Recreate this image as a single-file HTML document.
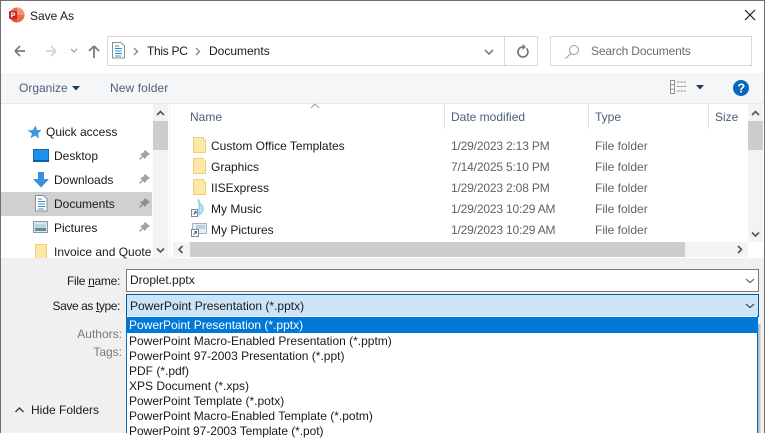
<!DOCTYPE html>
<html><head><meta charset="utf-8"><style>
html,body{margin:0;padding:0}
body{width:765px;height:433px;overflow:hidden;background:#fff;position:relative;font-family:"Liberation Sans",sans-serif;font-size:12px;color:#1a1a1a}
.a{position:absolute}
.t{position:absolute;white-space:nowrap;line-height:16px;height:16px}
.d{color:#5f6368}
.dt{letter-spacing:-.17px}
.h{color:#4c607a}
svg{position:absolute;overflow:visible}
</style></head><body>
<!-- regions -->
<div class="a" style="left:1px;top:73px;width:763px;height:30px;background:#f5f6f7"></div>
<div class="a" style="left:1px;top:103px;width:763px;height:1px;background:#e8eaec"></div>
<div class="a" style="left:1px;top:258px;width:763px;height:175px;background:#f0f0f0"></div>
<!-- frame -->
<div class="a" style="left:0;top:0;width:765px;height:1px;background:#6f6f6f"></div>
<div class="a" style="left:0;top:0;width:1px;height:433px;background:#6f6f6f"></div>
<div class="a" style="left:764px;top:0;width:1px;height:433px;background:#6f6f6f"></div>
<!-- title -->
<svg style="left:8px;top:7px" width="18" height="18"><circle cx="9" cy="8" r="7.500" fill="#ed6c47"/><path d="M9 .5A7.500 7.500 0 0 1 16.500 8H9z" fill="#ff8f6b"/><path d="M9 15.500A7.500 7.500 0 0 1 1.500 8H9z" fill="#d35230"/><rect x="1" y="4" width="8" height="8" rx="1" fill="#c4262e"/><text x="2.800" y="10.600" font-size="7" font-weight="bold" fill="#fff" font-family="Liberation Sans">P</text></svg>
<div class="t" style="left:30px;top:8px">Save As</div>
<svg style="left:744px;top:9px" width="14" height="14"><path d="M1 1L11 11M11 1L1 11" stroke="#111" stroke-width="1.100" fill="none"/></svg>
<!-- nav -->
<svg style="left:13px;top:43px" width="90" height="16"><path d="M2 8H12M2 8L7 3M2 8L7 13" stroke="#7a7a7a" stroke-width="1.700" fill="none"/><path d="M43 8H33M43 8L38 3M43 8L38 13" stroke="#d2d2d2" stroke-width="1.700" fill="none"/><path d="M58 6L61 9L64 6" stroke="#a9a9a9" stroke-width="1.400" fill="none"/><path d="M81 15V3M81 3L76 8M81 3L86 8" stroke="#7a7a7a" stroke-width="1.800" fill="none"/></svg>
<!-- address -->
<div class="a" style="left:107px;top:36px;width:429px;height:28px;border:1px solid #d9d9d9;background:#fff"></div>
<div class="a" style="left:504px;top:37px;width:1px;height:28px;background:#d9d9d9"></div>
<svg style="left:112px;top:42px" width="14" height="17"><path d="M.5.5H9L12.500 4V16H.5z" fill="#fff" stroke="#8a8f94"/><path d="M3 4H7M3 6.500H10M3 9H10M3 11.500H10M3 14H9" stroke="#2a8fd0" stroke-width="1"/></svg>
<svg style="left:133px;top:47px" width="8" height="10"><path d="M1 1L4.500 4.500L1 8" stroke="#8a8a8a" stroke-width="1.400" fill="none"/></svg>
<div class="t" style="left:147px;top:43px;letter-spacing:-.3px">This PC</div>
<svg style="left:195px;top:47px" width="8" height="10"><path d="M1 1L4.500 4.500L1 8" stroke="#8a8a8a" stroke-width="1.400" fill="none"/></svg>
<div class="t" style="left:209px;top:43px">Documents</div>
<svg style="left:484px;top:49px" width="12" height="8"><path d="M1 1L5 5L9 1" stroke="#6e6e6e" stroke-width="1.500" fill="none"/></svg>
<svg style="left:516px;top:44px" width="14" height="15"><path d="M10.500 4.500A5 5 0 1 1 6.500 3H8" stroke="#777" stroke-width="1.700" fill="none"/><path d="M6.500 0L10 3L6.500 6z" fill="#777"/></svg>
<!-- search -->
<div class="a" style="left:550px;top:36px;width:200px;height:28px;border:1px solid #d9d9d9;background:#fff"></div>
<svg style="left:564px;top:44px" width="16" height="15"><circle cx="10" cy="6" r="4.500" stroke="#9a9a9a" fill="none"/><path d="M7 9.500L1.500 14.500" stroke="#9a9a9a" stroke-width="1.100"/></svg>
<div class="t" style="left:591px;top:43px;color:#6b6b6b;letter-spacing:-.15px">Search Documents</div>
<!-- toolbar -->
<div class="t h" style="left:19px;top:80px">Organize</div>
<svg style="left:72px;top:86px" width="9" height="6"><path d="M0 0H8L4 4.500z" fill="#1e3a5f"/></svg>
<div class="t h" style="left:110px;top:80px;letter-spacing:.1px">New folder</div>
<svg style="left:670px;top:80px" width="18" height="14"><path d="M.5 .5H4.500V13.500H.5zM.5 4.800H4.500M.5 9.100H4.500" stroke="#8f8f8f" fill="#fff"/><path d="M7 2H16M7 6.500H16M7 11H16" stroke="#8f8f8f" stroke-dasharray="2.500 1"/></svg>
<svg style="left:696px;top:85px" width="9" height="6"><path d="M0 0H8L4 4.500z" fill="#1e3a5f"/></svg>
<svg style="left:733px;top:80px" width="17" height="17"><circle cx="8" cy="8" r="8" fill="#0a66b8"/><text x="4.500" y="12.500" font-size="12.500" font-weight="bold" fill="#fff" font-family="Liberation Sans">?</text></svg>
<!-- sidebar -->
<div class="a" style="left:1px;top:192px;width:151px;height:24px;background:#d0d0d0"></div>
<svg style="left:27px;top:125px" width="15" height="15"><path d="M8.500 0.500L10 5L14.500 5L11 8.500L12 13.500L8 10.500L3.500 13.500L5 8.500L.5 5.500L6 5z" fill="#3a96dd"/></svg>
<div class="t" style="left:46px;top:124px">Quick access</div>
<svg style="left:33px;top:149px" width="17" height="14"><rect x=".5" y=".5" width="15" height="11" fill="#1e90ea" stroke="#0f6cbd"/><rect x="0" y="11" width="16" height="2" fill="#0f5fa8"/></svg>
<div class="t" style="left:54px;top:148px">Desktop</div>
<svg style="left:33px;top:172px" width="17" height="17"><path d="M5 0H11V7H16L8 15.500L0 7H5z" fill="#3a8fdc"/></svg>
<div class="t" style="left:54px;top:172px">Downloads</div>
<svg style="left:35px;top:195px" width="13" height="17"><path d="M.5.5H8.500L12 4V16H.5z" fill="#fff" stroke="#8a8f94"/><path d="M3 4H7M3 6.500H10M3 9H10M3 11.500H10M3 14H9" stroke="#2a8fd0"/></svg>
<div class="t" style="left:54px;top:196px">Documents</div>
<svg style="left:33px;top:221px" width="16" height="14"><rect x=".5" y=".5" width="14" height="11" fill="#dbe7ee" stroke="#8d979e"/><path d="M2 7H13V10H2z" fill="#5f8f8a"/><path d="M2 3H13V7H2z" fill="#bcd3e4"/></svg>
<div class="t" style="left:54px;top:220px">Pictures</div>
<div class="a" style="left:35px;top:244px;width:12px;height:14px;background:#fce8a8;border:1px solid #f0d070;border-bottom:none;box-sizing:border-box"></div>
<div class="t" style="left:54px;top:244px;width:98px;overflow:hidden">Invoice and Quote</div>
<svg style="left:138px;top:150px" width="12" height="90">
<g fill="#a3a3a3"><path d="M7 0L12 4L9 6L7 9L5 7L2 10L1 9L4 6L2 4L5 3z"/><path d="M7 24L12 28L9 30L7 33L5 31L2 34L1 33L4 30L2 28L5 27z"/><path d="M7 48L12 52L9 54L7 57L5 55L2 58L1 57L4 54L2 52L5 51z" fill="#8f8f8f"/><path d="M7 72L12 76L9 78L7 81L5 79L2 82L1 81L4 78L2 76L5 75z"/></g></svg>
<!-- sidebar scrollbar -->
<div class="a" style="left:153px;top:104px;width:15px;height:154px;background:#f3f3f3"></div>
<div class="a" style="left:153px;top:121px;width:15px;height:29px;background:#cdcdcd"></div>
<svg style="left:156px;top:110px" width="10" height="7"><path d="M1 5L4.500 1.500L8 5" stroke="#555" stroke-width="1.600" fill="none"/></svg>
<svg style="left:156px;top:247px" width="10" height="7"><path d="M1 1.500L4.500 5L8 1.500" stroke="#555" stroke-width="1.600" fill="none"/></svg>
<div class="a" style="left:169px;top:104px;width:1px;height:154px;background:#eef0f2"></div>
<!-- headers -->
<svg style="left:310px;top:103px" width="10" height="6"><path d="M1 5L5 1L9 5" stroke="#9a9a9a" fill="none"/></svg>
<div class="t h" style="left:190px;top:109px">Name</div>
<div class="t h" style="left:451px;top:109px">Date modified</div>
<div class="t h" style="left:595px;top:109px">Type</div>
<div class="t h" style="left:715px;top:109px">Size</div>
<div class="a" style="left:444px;top:104px;width:1px;height:25px;background:#e5e5e5"></div>
<div class="a" style="left:588px;top:104px;width:1px;height:25px;background:#e5e5e5"></div>
<div class="a" style="left:708px;top:104px;width:1px;height:25px;background:#e5e5e5"></div>
<!-- folders -->
<svg style="left:193px;top:137px" width="14" height="100"><g fill="#fce8a8" stroke="#f0d070"><path d="M.5.500H10.500V3H12.500V15.500H.5z"/><path d="M.5 21.500H10.500V24H12.500V36.500H.5z"/><path d="M.5 42.500H10.500V45H12.500V57.500H.5z"/></g></svg>
<svg style="left:190px;top:200px" width="18" height="38"><path d="M8 0C9 4 14 5 13 10C13 12 11 14 9 15V0z" fill="#bfe3f8" stroke="#7cc4ee"/><rect x="1.500" y="9.500" width="6" height="7" fill="#fff" stroke="#7f8a94"/><path d="M3.500 14.500L6 11.500M4.500 11.500H6V13.500" stroke="#1f5fa8" fill="none"/><rect x="2.500" y="23.500" width="14" height="10" fill="#e6eef5" stroke="#a6b0b8"/><path d="M6 26H15M6 28H15" stroke="#8fb0cf"/><rect x="1.500" y="29.500" width="7" height="7" fill="#fff" stroke="#7f8a94"/><path d="M3.500 34.500L6.500 31.500M4.500 31.500H6.500V33.500" stroke="#1f5fa8" fill="none"/></svg>
<div class="t" style="left:211px;top:138px">Custom Office Templates</div>
<div class="t" style="left:211px;top:159px">Graphics</div>
<div class="t" style="left:211px;top:180px">IISExpress</div>
<div class="t" style="left:211px;top:201px">My Music</div>
<div class="t" style="left:211px;top:222px">My Pictures</div>
<div class="t d dt" style="left:451px;top:138px">1/29/2023 2:13 PM</div>
<div class="t d dt" style="left:451px;top:159px">7/14/2025 5:10 PM</div>
<div class="t d dt" style="left:451px;top:180px">1/29/2023 2:08 PM</div>
<div class="t d dt" style="left:451px;top:201px">1/29/2023 10:29 AM</div>
<div class="t d dt" style="left:451px;top:222px">1/29/2023 10:29 AM</div>
<div class="t d" style="left:595px;top:138px">File folder</div>
<div class="t d" style="left:595px;top:159px">File folder</div>
<div class="t d" style="left:595px;top:180px">File folder</div>
<div class="t d" style="left:595px;top:201px">File folder</div>
<div class="t d" style="left:595px;top:222px">File folder</div>
<!-- scrollbars -->
<div class="a" style="left:748px;top:104px;width:15px;height:138px;background:#f3f3f3"></div>
<div class="a" style="left:748px;top:121px;width:15px;height:29px;background:#cdcdcd"></div>
<svg style="left:751px;top:110px" width="10" height="7"><path d="M1 5L4.500 1.500L8 5" stroke="#555" stroke-width="1.600" fill="none"/></svg>
<svg style="left:751px;top:231px" width="10" height="7"><path d="M1 1.500L4.500 5L8 1.500" stroke="#555" stroke-width="1.600" fill="none"/></svg>
<div class="a" style="left:173px;top:242px;width:575px;height:15px;background:#f3f3f3"></div>
<div class="a" style="left:190px;top:242px;width:495px;height:15px;background:#cdcdcd"></div>
<svg style="left:177px;top:245px" width="8" height="10"><path d="M5.500 1L2 4.500L5.500 8" stroke="#555" stroke-width="1.600" fill="none"/></svg>
<svg style="left:736px;top:245px" width="8" height="10"><path d="M2 1L5.500 4.500L2 8" stroke="#555" stroke-width="1.600" fill="none"/></svg>
<!-- form -->
<div class="t" style="left:20px;top:273px;width:100px;text-align:right;letter-spacing:-.3px">File <u>n</u>ame:</div>
<div class="t" style="left:20px;top:298px;width:100px;text-align:right;letter-spacing:-.4px">Save as <u>t</u>ype:</div>
<div class="t" style="left:20px;top:326px;width:102px;text-align:right;color:#7a7a7a">Authors:</div>
<div class="t" style="left:20px;top:344px;width:102px;text-align:right;color:#7a7a7a">Tags:</div>
<div class="a" style="left:126px;top:269px;width:631px;height:21px;border:1px solid #7a7a7a;background:#fff"></div>
<div class="t" style="left:130px;top:272px">Droplet.pptx</div>
<svg style="left:745px;top:278px" width="12" height="7"><path d="M1 1L5 4.500L9 1" stroke="#555" stroke-width="1.100" fill="none"/></svg>
<div class="a" style="left:126px;top:294px;width:631px;height:21px;border:1px solid #005a9e;background:#cce4f7"></div>
<div class="t" style="left:130px;top:298px">PowerPoint Presentation (*.pptx)</div>
<svg style="left:745px;top:303px" width="12" height="7"><path d="M1 1L5 4.500L9 1" stroke="#333" stroke-width="1.100" fill="none"/></svg>
<svg style="left:14px;top:406px" width="12" height="8"><path d="M1.500 6L5.500 2L9.500 6" stroke="#444" stroke-width="1.500" fill="none"/></svg>
<div class="t" style="left:31px;top:402px">Hide Folders</div>
<!-- dropdown -->
<div class="a" style="left:758px;top:324px;width:3px;height:109px;background:linear-gradient(90deg,#a8a8a8,#e4e4e4)"></div>
<div class="a" style="left:126px;top:316px;width:632px;height:117px;background:#fff;border-left:1px solid #0a6cb8;border-right:1px solid #0a6cb8;box-sizing:border-box"></div>
<div class="a" style="left:127px;top:317px;width:631px;height:16px;background:#0078d7"></div>
<div class="t" style="left:129px;top:317px;color:#fff">PowerPoint Presentation (*.pptx)</div>
<div class="t" style="left:129px;top:333px">PowerPoint Macro-Enabled Presentation (*.pptm)</div>
<div class="t" style="left:129px;top:348px">PowerPoint 97-2003 Presentation (*.ppt)</div>
<div class="t" style="left:129px;top:363px">PDF (*.pdf)</div>
<div class="t" style="left:129px;top:378px">XPS Document (*.xps)</div>
<div class="t" style="left:129px;top:393px">PowerPoint Template (*.potx)</div>
<div class="t" style="left:129px;top:408px">PowerPoint Macro-Enabled Template (*.potm)</div>
<div class="t" style="left:129px;top:423px;letter-spacing:-.06px">PowerPoint 97-2003 Template (*.pot)</div>
</body></html>
